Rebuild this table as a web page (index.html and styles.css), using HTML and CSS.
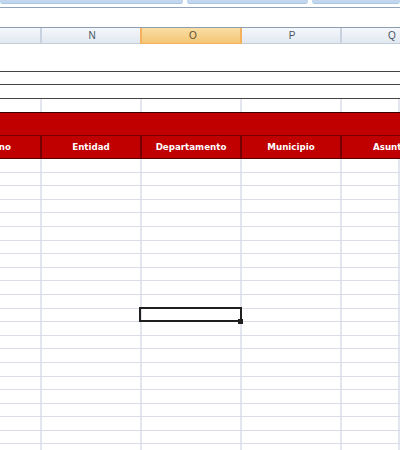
FILE: index.html
```html
<!DOCTYPE html>
<html>
<head>
<meta charset="utf-8">
<link rel="stylesheet" href="styles.css">
</head>
<body>
<div class="sheet">
  <div class="tabs">
    <div class="tab tab-a"></div>
    <div class="tab tab-b"></div>
    <div class="tab tab-c"></div>
  </div>
  <div class="formula"></div>
  <div class="cols colhead">
    <div class="ch"></div>
    <div class="ch">N</div>
    <div class="ch ch-sel">O</div>
    <div class="ch">P</div>
    <div class="ch ch-last">Q</div>
  </div>
  <div class="blank"></div>
  <div class="band band-1"></div>
  <div class="band band-2"></div>
  <div class="cols gridrow pre"><div class="c"></div><div class="c"></div><div class="c"></div><div class="c"></div><div class="c"></div></div>
  <div class="title"></div>
  <div class="cols hdr">
    <div class="h h-first"><span class="h-clip">Ciudadano</span></div>
    <div class="h">Entidad</div>
    <div class="h">Departamento</div>
    <div class="h">Municipio</div>
    <div class="h h-last">Asunto</div>
  </div>
  <div class="body" id="body"></div>
</div>
<script>
  var body = document.getElementById('body');
  for (var r = 0; r < 22; r++) {
    var row = document.createElement('div');
    row.className = 'cols gridrow';
    for (var c = 0; c < 5; c++) {
      var cell = document.createElement('div');
      cell.className = 'c' + (r === 11 && c === 2 ? ' active' : '');
      row.appendChild(cell);
    }
    body.appendChild(row);
  }
</script>
</body>
</html>
```

FILE: styles.css
```css
html, body {
  margin: 0;
  padding: 0;
  background: #ffffff;
}

.sheet {
  width: 400px;
  height: 450px;
  overflow: hidden;
  font-family: "Liberation Sans", Arial, sans-serif;
}

.tabs {
  height: 7px;
  display: flex;
  gap: 4px;
  background: #ffffff;
  box-sizing: border-box;
}

.tab {
  height: 4px;
  background: #c2d7ef;
  border-bottom: 1px solid #aac4e2;
  border-radius: 0 0 3px 3px;
  box-sizing: border-box;
}

.tab-a { width: 183px; }
.tab-b { width: 121px; }
.tab-c { flex: 1; }

.formula {
  height: 21px;
  box-sizing: border-box;
  border-top: 1px solid #8fa2b9;
  border-bottom: 1px solid #8d9db1;
  background: #ffffff;
}

.cols {
  display: grid;
  grid-template-columns: 42px 100px 100px 100px 1fr;
}

.colhead {
  height: 16px;
  box-sizing: border-box;
  border-bottom: 1px solid #c3cedb;
  background: linear-gradient(#f4f7fb, #e2e8f0);
}

.ch {
  border-right: 2px solid #c8d2de;
  font-size: 10px;
  line-height: 15px;
  color: #4a5563;
  text-align: center;
  padding-left: 2px;
}

.ch-last {
  border-right: none;
  text-align: left;
  padding-left: 46px;
}

.ch-sel {
  margin-left: -2px;
  padding-left: 4px;
  border-left: 2px solid #f4b25c;
  border-right: 2px solid #f4b25c;
  border-bottom: 1px solid #f4b25c;
  margin-bottom: -1px;
  background: linear-gradient(#f9dea3, #f3c675);
  color: #5a4e36;
}

.blank {
  height: 28px;
  box-sizing: border-box;
  border-bottom: 1px solid #454545;
}

.band {
  box-sizing: border-box;
  border-bottom: 1px solid #454545;
}

.band-1 { height: 13px; }
.band-2 { height: 14px; }

.gridrow {
  height: 13.6px;
  box-sizing: border-box;
  border-bottom: 1px solid #dadde8;
}

.gridrow.pre {
  height: 13px;
  border-bottom: none;
}

.c {
  border-right: 2px solid #e3e6ef;
  position: relative;
}

.c.active::after {
  content: "";
  position: absolute;
  left: -3px;
  top: -2px;
  right: -2px;
  bottom: -1px;
  border: 2px solid #1f1f1f;
  z-index: 2;
}

.c.active::before {
  content: "";
  position: absolute;
  right: -3px;
  bottom: -3px;
  width: 5px;
  height: 5px;
  background: #1f1f1f;
  z-index: 3;
}

.title {
  height: 24px;
  box-sizing: border-box;
  background: #c00000;
  border-top: 1px solid #3c0000;
  border-bottom: 1px solid #7a0000;
}

.hdr {
  height: 23px;
  box-sizing: border-box;
  background: #c00000;
  border-bottom: 1px solid #5a0000;
}

.h {
  border-right: 2px solid #760000;
  color: #ffffff;
  font-family: "DejaVu Sans", Verdana, sans-serif;
  font-weight: bold;
  font-size: 8.7px;
  line-height: 22px;
  text-align: center;
  white-space: nowrap;
  overflow: hidden;
}

.h-first {
  display: flex;
  justify-content: flex-end;
}

.h-clip {
  padding-right: 29px;
}

.h-last {
  border-right: none;
  text-align: left;
  padding-left: 31px;
}
```
